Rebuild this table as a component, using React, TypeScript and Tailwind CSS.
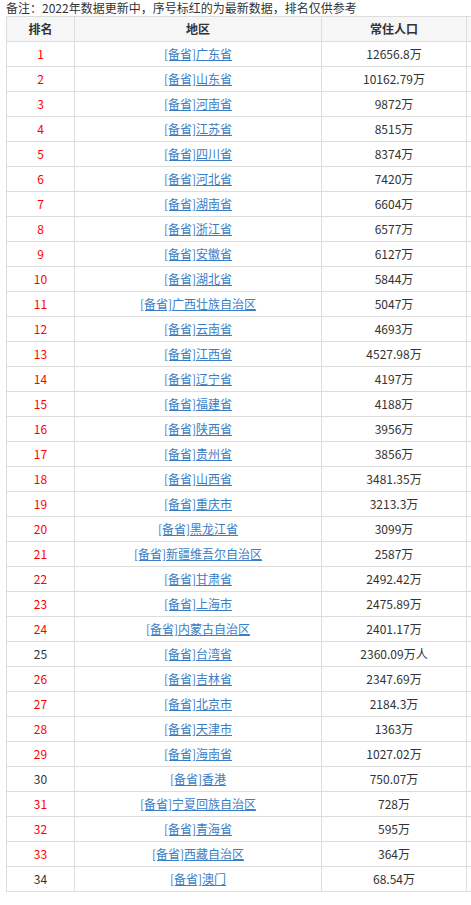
const rows: [number, string, string, boolean][] = [
  [1, "广东省", "12656.8万", true],
  [2, "山东省", "10162.79万", true],
  [3, "河南省", "9872万", true],
  [4, "江苏省", "8515万", true],
  [5, "四川省", "8374万", true],
  [6, "河北省", "7420万", true],
  [7, "湖南省", "6604万", true],
  [8, "浙江省", "6577万", true],
  [9, "安徽省", "6127万", true],
  [10, "湖北省", "5844万", true],
  [11, "广西壮族自治区", "5047万", true],
  [12, "云南省", "4693万", true],
  [13, "江西省", "4527.98万", true],
  [14, "辽宁省", "4197万", true],
  [15, "福建省", "4188万", true],
  [16, "陕西省", "3956万", true],
  [17, "贵州省", "3856万", true],
  [18, "山西省", "3481.35万", true],
  [19, "重庆市", "3213.3万", true],
  [20, "黑龙江省", "3099万", true],
  [21, "新疆维吾尔自治区", "2587万", true],
  [22, "甘肃省", "2492.42万", true],
  [23, "上海市", "2475.89万", true],
  [24, "内蒙古自治区", "2401.17万", true],
  [25, "台湾省", "2360.09万人", false],
  [26, "吉林省", "2347.69万", true],
  [27, "北京市", "2184.3万", true],
  [28, "天津市", "1363万", true],
  [29, "海南省", "1027.02万", true],
  [30, "香港", "750.07万", false],
  [31, "宁夏回族自治区", "728万", true],
  [32, "青海省", "595万", true],
  [33, "西藏自治区", "364万", true],
  [34, "澳门", "68.54万", false],
];

export default function App() {
  return (
    <div
      className="w-[471px] h-[905px] overflow-hidden bg-white text-[12px] text-[#333]"
      style={{ fontFamily: '"Noto Sans CJK SC", "Noto Sans", sans-serif' }}
    >
      <p className="h-[16px] leading-[16px] pl-[6px]">
        备注：2022年数据更新中，序号标红的为最新数据，排名仅供参考
      </p>
      <table className="ml-[6px] w-[472px] border-collapse border border-[#c9d8e9] table-fixed">
        <colgroup>
          <col className="w-[68px]" />
          <col className="w-[247px]" />
          <col className="w-[145px]" />
          <col />
        </colgroup>
        <thead>
          <tr className="h-[25px] bg-[#f6f6f6]">
            <th className="border border-[#dddddd] font-bold">排名</th>
            <th className="border border-[#dddddd] font-bold">地区</th>
            <th className="border border-[#dddddd] font-bold">常住人口</th>
            <th className="border border-[#dddddd]"></th>
          </tr>
        </thead>
        <tbody>
          {rows.map(([n, name, pop, red]) => (
            <tr key={n} className="h-[25px]">
              <td
                className={`border border-[#dddddd] text-center ${red ? "text-[#ff0000]" : "text-[#333]"}`}
              >
                {n}
              </td>
              <td className="border border-[#dddddd] text-center">
                <a href="#" className="text-[#3b7dc4] underline">
                  [备省]{name}
                </a>
              </td>
              <td className="border border-[#dddddd] text-center">{pop}</td>
              <td className="border border-[#dddddd]"></td>
            </tr>
          ))}
        </tbody>
      </table>
    </div>
  );
}
